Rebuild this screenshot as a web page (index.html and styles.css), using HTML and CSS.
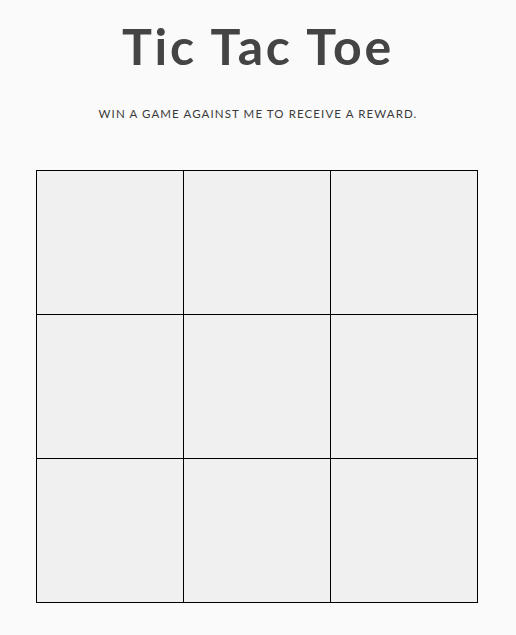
FILE: index.html
```html
<!DOCTYPE html>
<html>
<head>
<meta charset="utf-8">
<title>Tic Tac Toe</title>
<link rel="stylesheet" href="styles.css">
</head>
<body>
<main class="page">
  <h1 class="title">Tic Tac Toe</h1>
  <p class="subtitle">Win a game against me to receive a reward.</p>
  <div class="board">
    <div class="cell"></div>
    <div class="cell"></div>
    <div class="cell"></div>
    <div class="cell"></div>
    <div class="cell"></div>
    <div class="cell"></div>
    <div class="cell"></div>
    <div class="cell"></div>
    <div class="cell"></div>
  </div>
</main>
</body>
</html>
```
FILE: styles.css
```css
html, body {
  margin: 0;
  padding: 0;
  background: #fafafa;
}
.page {
  font-family: Lato, "Noto Sans", sans-serif;
  color: #444;
  padding-top: 20px;
}
.title {
  margin: 0;
  text-align: center;
  font-size: 50px;
  line-height: 52px;
  font-weight: 700;
  letter-spacing: 2.8px;
}
.subtitle {
  margin: 0;
  margin-top: 34px;
  text-align: center;
  font-size: 11.5px;
  line-height: 16px;
  font-weight: 400;
  color: #3a3a3a;
  text-transform: uppercase;
  letter-spacing: 1.1px;
}
.board {
  margin: 48px 0 0 36px;
  width: 442px;
  display: grid;
  grid-template-columns: repeat(3, 146px);
  grid-template-rows: repeat(3, 143px);
  gap: 1px;
  padding: 1px;
  box-sizing: border-box;
  background: #000;
}
.cell {
  background: #f0f0f0;
}
```
